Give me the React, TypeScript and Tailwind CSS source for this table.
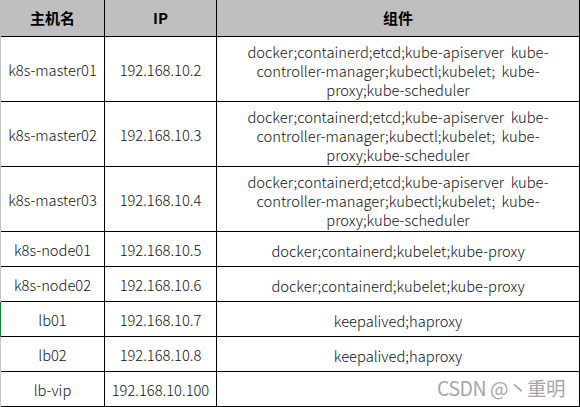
const font = { fontFamily: '"Noto Sans CJK SC", "Noto Sans", sans-serif' }

type Row = { host: string; ip: string; parts: string[]; tall?: boolean; mark?: boolean }

const master = [
  "docker;containerd;etcd;kube-apiserver  kube-",
  "controller-manager;kubectl;kubelet;  kube-",
  "proxy;kube-scheduler",
]

const rows: Row[] = [
  { host: "k8s-master01", ip: "192.168.10.2", parts: master, tall: true },
  { host: "k8s-master02", ip: "192.168.10.3", parts: master, tall: true },
  { host: "k8s-master03", ip: "192.168.10.4", parts: master, tall: true },
  { host: "k8s-node01", ip: "192.168.10.5", parts: ["docker;containerd;kubelet;kube-proxy"] },
  { host: "k8s-node02", ip: "192.168.10.6", parts: ["docker;containerd;kubelet;kube-proxy"] },
  { host: "lb01", ip: "192.168.10.7", parts: ["keepalived;haproxy"], mark: true },
  { host: "lb02", ip: "192.168.10.8", parts: ["keepalived;haproxy"] },
  { host: "lb-vip", ip: "192.168.10.100", parts: [""] },
]

export default function App() {
  return (
    <div className="relative w-[580px] h-[407px] bg-white text-[14.7px] text-[#111] font-light overflow-hidden" style={font}>
      <div className="grid grid-cols-[1px_104px_112px_363px]">
        {/* header */}
        <div className="h-[37px] bg-[#bfbfbf]" />
        <div className="h-[37px] bg-[#bfbfbf] border-r border-b border-black flex items-center justify-center text-[15px] font-bold text-black">主机名</div>
        <div className="h-[37px] bg-[#bfbfbf] border-r border-b border-black flex items-center justify-center text-[15px] font-bold text-black">IP</div>
        <div className="h-[37px] bg-[#bfbfbf] border-r border-b border-black flex items-center justify-center text-[15px] font-bold text-black">组件</div>

        {rows.map((r) => {
          const h = r.tall ? "h-[65px]" : "h-[35px]"
          return (
            <div key={r.host} className="contents">
              <div className={`${h} ${r.mark ? "bg-[#217346]" : "bg-[#c6c6c6]"}`} />
              <div className={`${h} border-r border-b border-black flex items-center justify-center pt-[2px]`}>{r.host}</div>
              <div className={`${h} border-r border-b border-black flex items-center justify-center pt-[2px]`}>{r.ip}</div>
              <div className={`${h} border-r border-b border-black flex flex-col items-center justify-center leading-[19px] pt-[2px]`}>
                {r.parts.map((p, i) => (
                  <span key={i} className="whitespace-pre">{p}</span>
                ))}
              </div>
            </div>
          )
        })}
      </div>

      {/* watermark */}
      <div className="absolute right-[15px] bottom-[5px] text-[19.5px] text-[#a6a6a6] font-normal tracking-tight">CSDN @丶重明</div>
    </div>
  )
}
